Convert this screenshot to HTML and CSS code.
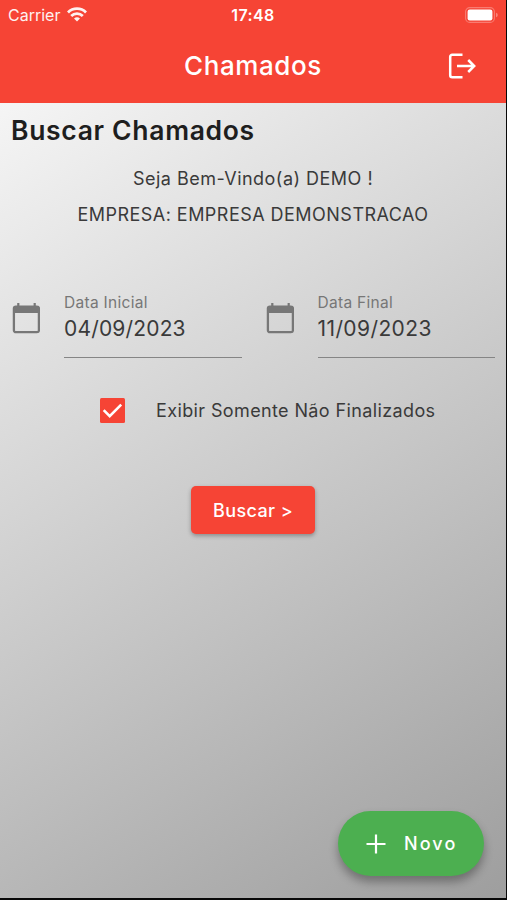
FILE: index.html
```html
<!DOCTYPE html>
<html lang="pt-BR">
  <head>
    <meta charset="utf-8">
    <title>Chamados</title>
    <meta name="viewport" content="width=device-width, initial-scale=1">
    <link rel="stylesheet" href="styles.css">
  </head>
  <body>
    <div class="tela">
      <header class="topo">
        <div class="status">
          <div class="operadora">
            <span>Carrier</span>
            <svg class="wifi" viewBox="0 0 20 15" width="20" height="15">
              <g fill="none" stroke="#fff" stroke-width="2.8">
                <path d="M1 5.4a12.8 12.8 0 0 1 18 0"/>
                <path d="M4.2 8.9a8.3 8.3 0 0 1 11.6 0"/>
              </g>
              <path d="M10 14.6l-3-3a4.3 4.3 0 0 1 6 0z" fill="#fff"/>
            </svg>
          </div>
          <span class="hora">17:48</span>
          <svg class="bateria" viewBox="0 0 33 16" width="33" height="16">
            <rect x=".6" y=".6" width="28.8" height="14.8" rx="4.2" fill="none" stroke="#fff" stroke-opacity=".3" stroke-width="1.1"/>
            <rect x="2.6" y="2.6" width="24.8" height="10.8" rx="2.2" fill="#fff"/>
            <path d="M31 5.7q1.8.6 1.8 2.3T31 10.3z" fill="#fff" fill-opacity=".35"/>
          </svg>
        </div>
        <div class="barra">
          <h1>Chamados</h1>
          <svg class="sair" viewBox="0 0 28 26" width="28" height="26" fill="none" stroke="#fff" stroke-width="2.5">
            <path d="M14.5 1.8H4.2a2 2 0 0 0-2 2v18.4a2 2 0 0 0 2 2h10.3M9 13H26.5M20.2 7l6 6-6 6"/>
          </svg>
        </div>
      </header>

      <main class="corpo">
        <h2>Buscar Chamados</h2>
        <p class="saudacao">Seja Bem-Vindo(a) DEMO !</p>
        <p class="empresa">EMPRESA: EMPRESA DEMONSTRACAO</p>

        <div class="datas">
          <div class="campo">
            <svg class="calendario" viewBox="0 0 28 31" width="28" height="31">
              <rect x="1.9" y="3.6" width="25" height="25.6" rx="2" fill="none" stroke="#777" stroke-width="2.3"/>
              <path d="M1.5 4h25.8v6H1.5zM5.2 0h2.2v4H5.2zM21.6 0h2.2v4h-2.2z" fill="#777"/>
            </svg>
            <div class="valor">
              <label>Data Inicial</label>
              <span>04/09/2023</span>
            </div>
          </div>
          <div class="campo">
            <svg class="calendario" viewBox="0 0 28 31" width="28" height="31">
              <rect x="1.9" y="3.6" width="25" height="25.6" rx="2" fill="none" stroke="#777" stroke-width="2.3"/>
              <path d="M1.5 4h25.8v6H1.5zM5.2 0h2.2v4H5.2zM21.6 0h2.2v4h-2.2z" fill="#777"/>
            </svg>
            <div class="valor">
              <label>Data Final</label>
              <span class="final">11/09/2023</span>
            </div>
          </div>
        </div>

        <div class="filtro">
          <svg class="check" viewBox="0 0 25 25" width="25" height="25">
            <rect width="25" height="25" rx="1.5" fill="#f64435"/>
            <path d="M3.7 12.2l6 6L21.2 6.7" fill="none" stroke="#fff" stroke-width="2.6"/>
          </svg>
          <span>Exibir Somente Não Finalizados</span>
        </div>

        <button type="button" class="buscar">Buscar &gt;</button>
      </main>

      <button type="button" class="novo">
        <svg viewBox="0 0 20 20" width="20" height="20">
          <path d="M10 .5v19M.5 10h19" stroke="#fff" stroke-width="2.2"/>
        </svg>
        <span>Novo</span>
      </button>
    </div>
  </body>
</html>
```

FILE: styles.css
```css
* {
  box-sizing: border-box;
}

body {
  margin: 0;
  padding: 0 1px 2px 0;
  height: 900px;
  overflow: hidden;
  background: #080808;
  font-family: Inter, "Liberation Sans", sans-serif;
}

h1, h2, p {
  margin: 0;
}

button {
  border: none;
  font-family: inherit;
  color: white;
}

.tela {
  position: relative;
  display: flex;
  flex-direction: column;
  height: 898px;
}

.topo {
  height: 103px;
  background: #f64435;
  color: #fff;
}

.status {
  display: grid;
  grid-template-columns: 1fr auto 1fr;
  align-items: center;
  height: 29px;
  padding: 0 8px;
}

.operadora {
  display: flex;
  align-items: center;
  gap: 7px;
  font-size: 16px;
  opacity: 0.93;
}

.hora {
  font-size: 16px;
  font-weight: 600;
  letter-spacing: 0.4px;
}

.bateria {
  justify-self: end;
}

.barra {
  display: grid;
  grid-template-columns: 1fr auto 1fr;
  align-items: center;
  height: 73px;
  padding: 0 30px;
}

.barra h1 {
  grid-column: 2;
  font-size: 26px;
  font-weight: 500;
  letter-spacing: 0.6px;
}

.sair {
  justify-self: end;
}

.corpo {
  flex: 1;
  display: flex;
  flex-direction: column;
  background: linear-gradient(147.5deg, #f5f5f5, #9e9e9e);
  color: #3a3a3a;
}

.corpo h2 {
  padding: 10px 11px 0;
  font-size: 26.5px;
  line-height: 34px;
  font-weight: 600;
  letter-spacing: 0.68px;
  color: #1e1e1e;
}

.saudacao, .empresa {
  text-align: center;
  font-size: 18px;
  line-height: 36px;
}

.saudacao {
  margin-top: 14px;
  letter-spacing: 0.48px;
}

.empresa {
  letter-spacing: 0.47px;
}

.datas {
  display: grid;
  grid-template-columns: 1fr 1fr;
  column-gap: 24px;
  margin-top: 58px;
  padding: 0 11px 0 12px;
}

.campo {
  display: flex;
  gap: 24px;
}

.calendario {
  margin-top: 12px;
}

.valor {
  flex: 1;
  display: flex;
  flex-direction: column;
  height: 67px;
  padding-top: 1px;
  border-bottom: 1px solid #858585;
}

.valor label {
  font-size: 15.5px;
  line-height: 21px;
  letter-spacing: 0.3px;
  color: #777;
}

.valor span {
  font-size: 21px;
  line-height: 32px;
  letter-spacing: 0.17px;
}

.valor .final {
  letter-spacing: 0.4px;
}

.filtro {
  display: flex;
  align-items: center;
  gap: 31px;
  margin: 40px 0 0 100px;
  font-size: 18px;
  letter-spacing: 0.38px;
}

.buscar {
  align-self: center;
  width: 124px;
  height: 48px;
  margin-top: 63px;
  padding: 0;
  border-radius: 5px;
  background: #f64435;
  box-shadow: 0 2px 4px rgba(0, 0, 0, 0.3);
  font-size: 18px;
  font-weight: 500;
  letter-spacing: 0.4px;
}

/* botão flutuante */
.novo {
  position: absolute;
  right: 22px;
  bottom: 22px;
  display: flex;
  align-items: center;
  gap: 18px;
  width: 146px;
  height: 65px;
  padding: 0 0 0 28px;
  border-radius: 33px;
  background: #4caf50;
  box-shadow: 0 6px 10px rgba(0, 0, 0, 0.32);
  font-size: 18px;
  font-weight: 500;
  letter-spacing: 2.1px;
}
```
